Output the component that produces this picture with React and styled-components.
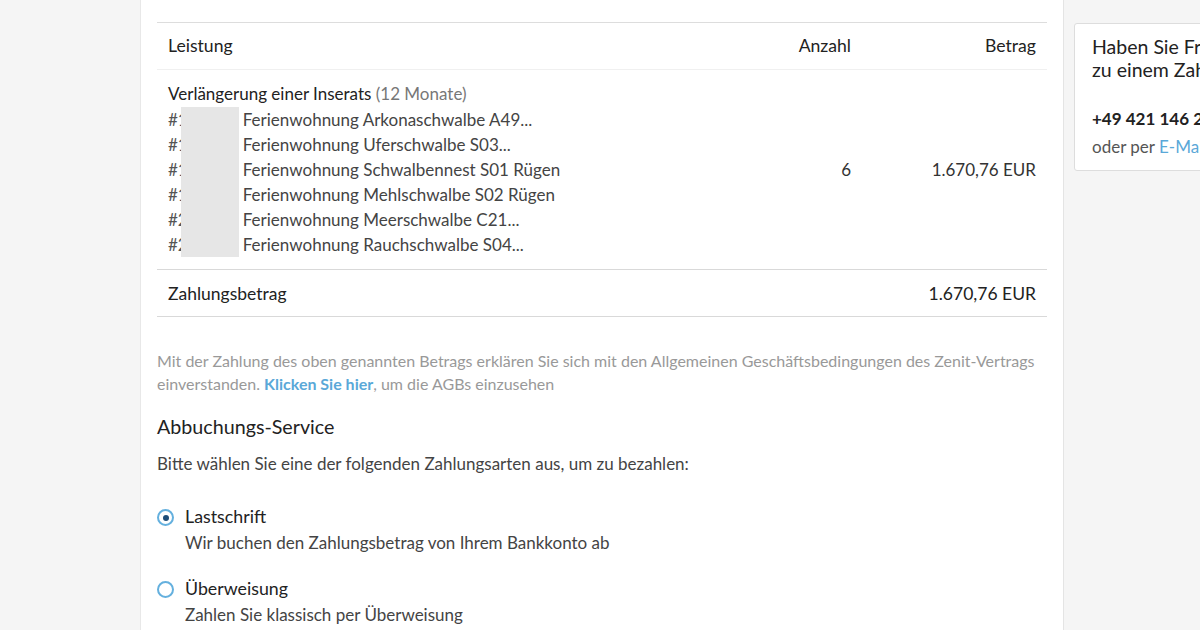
import React from 'react'
import styled, { createGlobalStyle } from 'styled-components'

const GlobalStyle = createGlobalStyle`
  html, body {
    margin: 0;
    padding: 0;
    background: #f5f5f5;
    font-family: Lato, "Open Sans", sans-serif;
    color: #333;
    overflow: hidden;
  }
`

const items = [
  { id: '#1', name: 'Ferienwohnung Arkonaschwalbe A49...' },
  { id: '#1', name: 'Ferienwohnung Uferschwalbe S03...' },
  { id: '#1', name: 'Ferienwohnung Schwalbennest S01 Rügen' },
  { id: '#1', name: 'Ferienwohnung Mehlschwalbe S02 Rügen' },
  { id: '#2', name: 'Ferienwohnung Meerschwalbe C21...' },
  { id: '#2', name: 'Ferienwohnung Rauchschwalbe S04...' },
]

const options = [
  { title: 'Lastschrift', text: 'Wir buchen den Zahlungsbetrag von Ihrem Bankkonto ab', checked: true },
  { title: 'Überweisung', text: 'Zahlen Sie klassisch per Überweisung', checked: false },
]

const App = () => {
  return (
    <>
      <GlobalStyle />
      <Page>
        <Main>
          <Intro>Zahlung</Intro>
          <Table>
            <thead>
              <tr>
                <Th>Leistung</Th>
                <Th align="right">Anzahl</Th>
                <Th align="right">Betrag</Th>
              </tr>
            </thead>
            <tbody>
              <tr>
                <Td>
                  <Product>
                    Verlängerung einer Inserats <Muted>(12 Monate)</Muted>
                  </Product>
                  {items.map((item, i) => (
                    <ItemLine key={i}>
                      <Id>{item.id}</Id>
                      <Blur />
                      {item.name}
                    </ItemLine>
                  ))}
                </Td>
                <Td align="right" width="190">6</Td>
                <Td align="right" width="163">1.670,76 EUR</Td>
              </tr>
              <TotalRow>
                <Td>Zahlungsbetrag</Td>
                <Td />
                <Td align="right">1.670,76 EUR</Td>
              </TotalRow>
            </tbody>
          </Table>

          <Note>
            Mit der Zahlung des oben genannten Betrags erklären Sie sich mit den Allgemeinen Geschäftsbedingungen des Zenit-Vertrags
            einverstanden. <a href="#">Klicken Sie hier</a>, um die AGBs einzusehen
          </Note>

          <Heading>Abbuchungs-Service</Heading>
          <Lead>Bitte wählen Sie eine der folgenden Zahlungsarten aus, um zu bezahlen:</Lead>

          <Options>
            {options.map((o) => (
              <Option key={o.title}>
                <Radio $checked={o.checked} />
                <div>
                  <OptionTitle>{o.title}</OptionTitle>
                  <OptionText>{o.text}</OptionText>
                </div>
              </Option>
            ))}
          </Options>
        </Main>

        <Side>
          <HelpCard>
            <HelpTitle>Haben Sie Fragen<br />zu einem Zahlungsvorgang?</HelpTitle>
            <Phone>+49 421 146 2 00 00</Phone>
            <HelpText>oder per <a href="#">E-Mail</a></HelpText>
          </HelpCard>
        </Side>
      </Page>
    </>
  )
}

const Page = styled.div`
  display: flex;
  align-items: flex-start;
  gap: 10px;
  padding-left: 140px;
  width: 1400px;
`

const Main = styled.main`
  width: 890px;
  min-height: 660px;
  background: #fff;
  border-left: 1px solid #e8e8e8;
  border-right: 1px solid #e4e4e4;
  padding: 0 16px;
  margin-top: -30px;
`

const Intro = styled.div`
  font-size: 17px;
  line-height: 25px;
  padding: 4px 0 23px 0;
  color: #333;
`

const Table = styled.table`
  width: 100%;
  border-collapse: collapse;
  border-top: 1px solid #ddd;
  font-size: 17px;
  color: #333;
`

const Th = styled.th`
  text-align: ${({ align }) => align || 'left'};
  font-weight: 400;
  font-size: 17.6px;
  padding: 11px 11px 12px 11px;
  line-height: 23px;
  border-bottom: 1px solid #f0f0f0;
  color: #222;
`

const Td = styled.td`
  text-align: ${({ align }) => align || 'left'};
  padding: 11px 11px 12px 11px;
  line-height: 25px;
  vertical-align: middle;
  border-bottom: 1px solid #d9d9d9;
  color: #333;
`

const TotalRow = styled.tr`
  td {
    padding: 11px 11px 10px 11px;
    font-size: 17.5px;
    color: #222;
  }
`

const Product = styled.div`
  color: #222;
  margin-bottom: 1px;
`

const Muted = styled.span`
  color: #777;
`

const ItemLine = styled.div`
  display: flex;
  align-items: stretch;
  color: #444;
  white-space: nowrap;
`

const Id = styled.span`
  color: #555;
`

const Blur = styled.span`
  display: inline-block;
  width: 58px;
  height: 25px;
  background: #e6e6e6;
  margin-left: -7px;
  margin-right: 4px;
`

const Note = styled.p`
  margin: 32px 0 0 0;
  font-size: 16px;
  line-height: 23px;
  color: #999;

  a {
    color: #5aa8d8;
    font-weight: 700;
    text-decoration: none;
  }
`

const Heading = styled.h3`
  margin: 18px 0 0 0;
  font-size: 19.7px;
  font-weight: 400;
  line-height: 28px;
  color: #222;
`

const Lead = styled.p`
  margin: 11px 0 0 0;
  font-size: 17px;
  line-height: 24px;
  color: #444;
`

const Options = styled.div`
  display: flex;
  flex-direction: column;
  gap: 20px;
  margin-top: 28px;
`

const Option = styled.label`
  display: flex;
  align-items: flex-start;
  gap: 11px;
`

const Radio = styled.span`
  flex: none;
  position: relative;
  width: 13px;
  height: 13px;
  border: 2px solid #64b0de;
  border-radius: 50%;
  margin-top: 5px;
  background: #fff;

  &::after {
    content: '';
    display: ${({ $checked }) => ($checked ? 'block' : 'none')};
    position: absolute;
    left: 3.5px;
    top: 3.5px;
    width: 6px;
    height: 6px;
    border-radius: 50%;
    background: #1d4d78;
  }
`

const OptionTitle = styled.div`
  font-size: 17.8px;
  line-height: 25px;
  color: #222;
`

const OptionText = styled.div`
  font-size: 17px;
  line-height: 27px;
  color: #444;
`

const Side = styled.aside`
  width: 300px;
  padding-top: 23px;
`

const HelpCard = styled.div`
  background: #fff;
  border: 1px solid #ddd;
  border-radius: 3px;
  padding: 11px 17px 11px 17px;
`

const HelpTitle = styled.div`
  font-size: 19.5px;
  line-height: 23px;
  color: #222;
`

const Phone = styled.div`
  margin-top: 26px;
  font-size: 17px;
  font-weight: 700;
  line-height: 24px;
  color: #222;
`

const HelpText = styled.div`
  margin-top: 4px;
  font-size: 17px;
  line-height: 24px;
  color: #555;

  a {
    color: #5aa8d8;
    text-decoration: none;
  }
`

export default App
